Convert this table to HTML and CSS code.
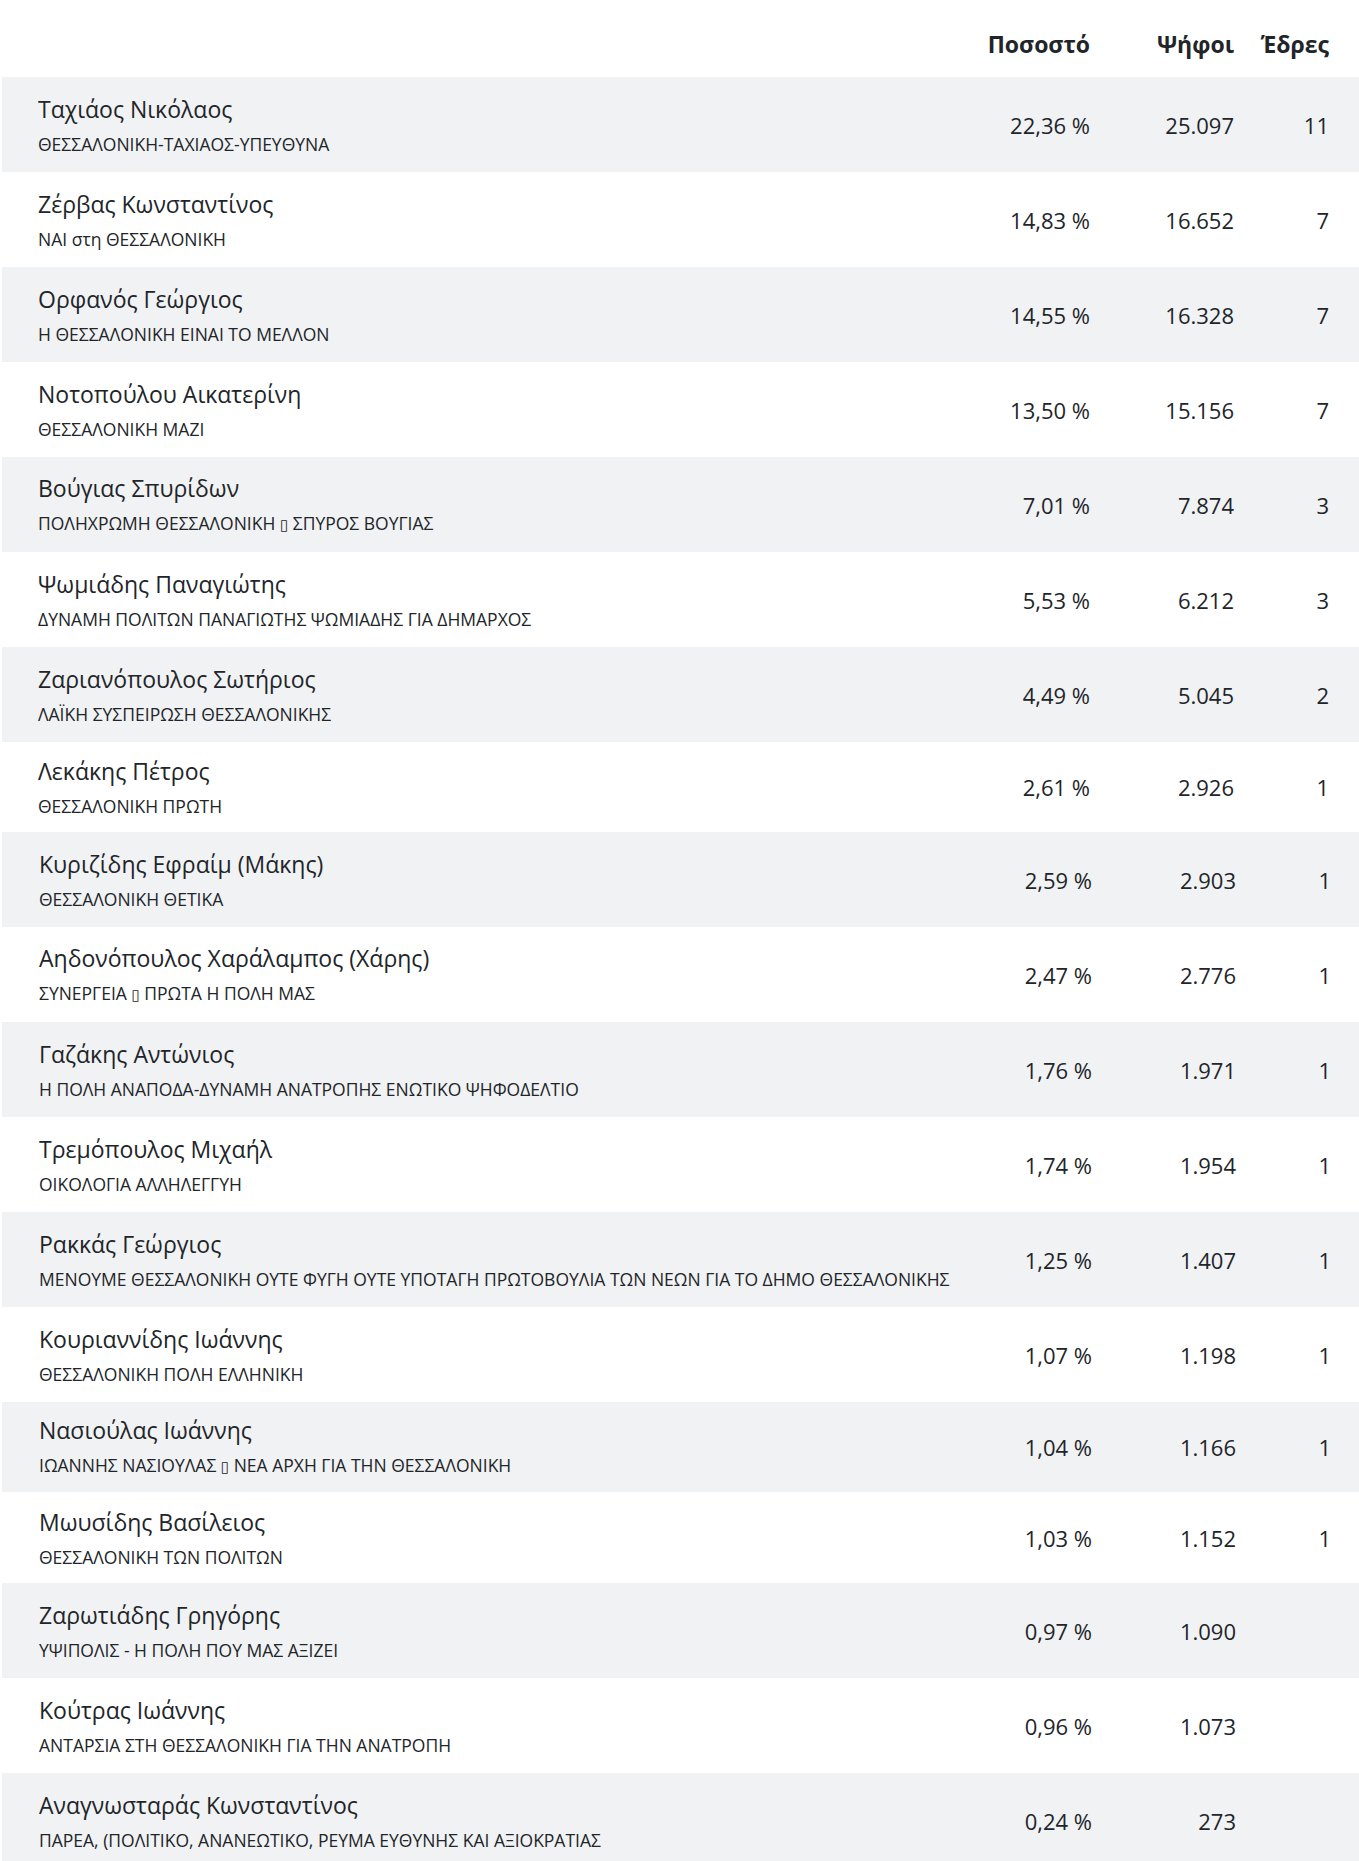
FILE: index.html
```html
<!DOCTYPE html>
<html lang="el">
<head>
<meta charset="utf-8">
<title>Αποτελέσματα</title>
<link rel="stylesheet" href="styles.css">
</head>
<body>
<div class="results">
  <div class="row head">
    <div class="cell name-cell"></div>
    <div class="cell num">Ποσοστό</div>
    <div class="cell num">Ψήφοι</div>
    <div class="cell num">Έδρες</div>
  </div>

  <div class="row odd">
    <div class="cell name-cell"><div class="name">Ταχιάος Νικόλαος</div><div class="party">ΘΕΣΣΑΛΟΝΙΚΗ-ΤΑΧΙΑΟΣ-ΥΠΕΥΘΥΝΑ</div></div>
    <div class="cell num">22,36 %</div><div class="cell num">25.097</div><div class="cell num">11</div>
  </div>
  <div class="row">
    <div class="cell name-cell"><div class="name">Ζέρβας Κωνσταντίνος</div><div class="party">ΝΑΙ στη ΘΕΣΣΑΛΟΝΙΚΗ</div></div>
    <div class="cell num">14,83 %</div><div class="cell num">16.652</div><div class="cell num">7</div>
  </div>
  <div class="row odd">
    <div class="cell name-cell"><div class="name">Ορφανός Γεώργιος</div><div class="party">Η ΘΕΣΣΑΛΟΝΙΚΗ ΕΙΝΑΙ ΤΟ ΜΕΛΛΟΝ</div></div>
    <div class="cell num">14,55 %</div><div class="cell num">16.328</div><div class="cell num">7</div>
  </div>
  <div class="row">
    <div class="cell name-cell"><div class="name">Νοτοπούλου Αικατερίνη</div><div class="party">ΘΕΣΣΑΛΟΝΙΚΗ ΜΑΖΙ</div></div>
    <div class="cell num">13,50 %</div><div class="cell num">15.156</div><div class="cell num">7</div>
  </div>
  <div class="row odd">
    <div class="cell name-cell"><div class="name">Βούγιας Σπυρίδων</div><div class="party">ΠΟΛΗΧΡΩΜΗ ΘΕΣΣΑΛΟΝΙΚΗ <span class="tofu">▯</span> ΣΠΥΡΟΣ ΒΟΥΓΙΑΣ</div></div>
    <div class="cell num">7,01 %</div><div class="cell num">7.874</div><div class="cell num">3</div>
  </div>
  <div class="row">
    <div class="cell name-cell"><div class="name">Ψωμιάδης Παναγιώτης</div><div class="party">ΔΥΝΑΜΗ ΠΟΛΙΤΩΝ ΠΑΝΑΓΙΩΤΗΣ ΨΩΜΙΑΔΗΣ ΓΙΑ ΔΗΜΑΡΧΟΣ</div></div>
    <div class="cell num">5,53 %</div><div class="cell num">6.212</div><div class="cell num">3</div>
  </div>
  <div class="row odd">
    <div class="cell name-cell"><div class="name">Ζαριανόπουλος Σωτήριος</div><div class="party">ΛΑΪΚΗ ΣΥΣΠΕΙΡΩΣΗ ΘΕΣΣΑΛΟΝΙΚΗΣ</div></div>
    <div class="cell num">4,49 %</div><div class="cell num">5.045</div><div class="cell num">2</div>
  </div>
  <div class="row short">
    <div class="cell name-cell"><div class="name">Λεκάκης Πέτρος</div><div class="party">ΘΕΣΣΑΛΟΝΙΚΗ ΠΡΩΤΗ</div></div>
    <div class="cell num">2,61 %</div><div class="cell num">2.926</div><div class="cell num">1</div>
  </div>
  <div class="row odd shift">
    <div class="cell name-cell"><div class="name">Κυριζίδης Εφραίμ (Μάκης)</div><div class="party">ΘΕΣΣΑΛΟΝΙΚΗ ΘΕΤΙΚΑ</div></div>
    <div class="cell num">2,59 %</div><div class="cell num">2.903</div><div class="cell num">1</div>
  </div>
  <div class="row shift">
    <div class="cell name-cell"><div class="name">Αηδονόπουλος Χαράλαμπος (Χάρης)</div><div class="party">ΣΥΝΕΡΓΕΙΑ <span class="tofu">▯</span> ΠΡΩΤΑ Η ΠΟΛΗ ΜΑΣ</div></div>
    <div class="cell num">2,47 %</div><div class="cell num">2.776</div><div class="cell num">1</div>
  </div>
  <div class="row odd shift">
    <div class="cell name-cell"><div class="name">Γαζάκης Αντώνιος</div><div class="party">Η ΠΟΛΗ ΑΝΑΠΟΔΑ-ΔΥΝΑΜΗ ΑΝΑΤΡΟΠΗΣ ΕΝΩΤΙΚΟ ΨΗΦΟΔΕΛΤΙΟ</div></div>
    <div class="cell num">1,76 %</div><div class="cell num">1.971</div><div class="cell num">1</div>
  </div>
  <div class="row shift">
    <div class="cell name-cell"><div class="name">Τρεμόπουλος Μιχαήλ</div><div class="party">ΟΙΚΟΛΟΓΙΑ ΑΛΛΗΛΕΓΓΥΗ</div></div>
    <div class="cell num">1,74 %</div><div class="cell num">1.954</div><div class="cell num">1</div>
  </div>
  <div class="row odd shift">
    <div class="cell name-cell"><div class="name">Ρακκάς Γεώργιος</div><div class="party">ΜΕΝΟΥΜΕ ΘΕΣΣΑΛΟΝΙΚΗ ΟΥΤΕ ΦΥΓΗ ΟΥΤΕ ΥΠΟΤΑΓΗ ΠΡΩΤΟΒΟΥΛΙΑ ΤΩΝ ΝΕΩΝ ΓΙΑ ΤΟ ΔΗΜΟ ΘΕΣΣΑΛΟΝΙΚΗΣ</div></div>
    <div class="cell num">1,25 %</div><div class="cell num">1.407</div><div class="cell num">1</div>
  </div>
  <div class="row shift">
    <div class="cell name-cell"><div class="name">Κουριαννίδης Ιωάννης</div><div class="party">ΘΕΣΣΑΛΟΝΙΚΗ ΠΟΛΗ ΕΛΛΗΝΙΚΗ</div></div>
    <div class="cell num">1,07 %</div><div class="cell num">1.198</div><div class="cell num">1</div>
  </div>
  <div class="row odd shift short">
    <div class="cell name-cell"><div class="name">Νασιούλας Ιωάννης</div><div class="party">ΙΩΑΝΝΗΣ ΝΑΣΙΟΥΛΑΣ <span class="tofu">▯</span> ΝΕΑ ΑΡΧΗ ΓΙΑ ΤΗΝ ΘΕΣΣΑΛΟΝΙΚΗ</div></div>
    <div class="cell num">1,04 %</div><div class="cell num">1.166</div><div class="cell num">1</div>
  </div>
  <div class="row shift mid">
    <div class="cell name-cell"><div class="name">Μωυσίδης Βασίλειος</div><div class="party">ΘΕΣΣΑΛΟΝΙΚΗ ΤΩΝ ΠΟΛΙΤΩΝ</div></div>
    <div class="cell num">1,03 %</div><div class="cell num">1.152</div><div class="cell num">1</div>
  </div>
  <div class="row odd shift">
    <div class="cell name-cell"><div class="name">Ζαρωτιάδης Γρηγόρης</div><div class="party">ΥΨΙΠΟΛΙΣ - Η ΠΟΛΗ ΠΟΥ ΜΑΣ ΑΞΙΖΕΙ</div></div>
    <div class="cell num">0,97 %</div><div class="cell num">1.090</div><div class="cell num"></div>
  </div>
  <div class="row shift">
    <div class="cell name-cell"><div class="name">Κούτρας Ιωάννης</div><div class="party">ΑΝΤΑΡΣΙΑ ΣΤΗ ΘΕΣΣΑΛΟΝΙΚΗ ΓΙΑ ΤΗΝ ΑΝΑΤΡΟΠΗ</div></div>
    <div class="cell num">0,96 %</div><div class="cell num">1.073</div><div class="cell num"></div>
  </div>
  <div class="row odd shift">
    <div class="cell name-cell"><div class="name">Αναγνωσταράς Κωνσταντίνος</div><div class="party">ΠΑΡΕΑ, (ΠΟΛΙΤΙΚΟ, ΑΝΑΝΕΩΤΙΚΟ, ΡΕΥΜΑ ΕΥΘΥΝΗΣ ΚΑΙ ΑΞΙΟΚΡΑΤΙΑΣ</div></div>
    <div class="cell num">0,24 %</div><div class="cell num">273</div><div class="cell num"></div>
  </div>
</div>
</body>
</html>
```

FILE: styles.css
```css
html, body {
  margin: 0;
  padding: 0;
  background: #ffffff;
}

body {
  font-family: "Open Sans", "Noto Sans", "DejaVu Sans", sans-serif;
  color: #212529;
}

.results {
  padding-left: 2px;
}

.row {
  display: grid;
  grid-template-columns: minmax(0, 1fr) 150px 144px 95px;
  padding-right: 30px;
  height: 95px;
  align-items: center;
}

.row.odd {
  background: #f1f2f4;
}

.row.short {
  height: 90px;
}

.row.mid {
  height: 91px;
}

.row.head {
  height: 77px;
  align-items: start;
}

.head .cell {
  padding-top: 29px;
  font-weight: 700;
  font-size: 23px;
  line-height: 30px;
}

.name-cell {
  padding-left: 36px;
  min-width: 0;
}

.shift .name-cell {
  padding-left: 37px;
}

.shift .num {
  position: relative;
  left: 2px;
}

.name {
  font-size: 23px;
  line-height: 30px;
  white-space: nowrap;
}

.party {
  font-size: 17.5px;
  line-height: 24px;
  margin-top: 8px;
  white-space: nowrap;
}

.tofu {
  font-family: "DejaVu Sans", sans-serif;
  font-size: 15px;
}

.num {
  text-align: right;
  font-size: 22px;
  line-height: 30px;
}
```
